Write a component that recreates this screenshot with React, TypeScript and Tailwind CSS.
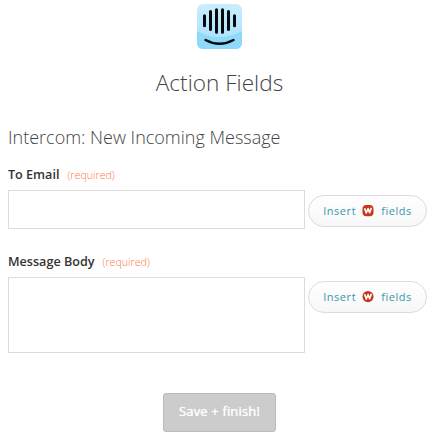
import React from 'react';

const IntercomLogo: React.FC = () => (
  <svg viewBox="0 0 45 45" className="w-[45px] h-[45px]">
    <defs>
      <linearGradient id="tile" x1="0" y1="0" x2="0" y2="1">
        <stop offset="0" stopColor="#c9edfd" />
        <stop offset="1" stopColor="#a6e0fb" />
      </linearGradient>
      <clipPath id="tile-clip">
        <rect width="45" height="45" rx="6" />
      </clipPath>
    </defs>
    <g clipPath="url(#tile-clip)">
      <rect width="45" height="45" fill="url(#tile)" />
      <path d="M0 27 Q22 39 45 27 V45 H0 Z" fill="#8fd9fb" />
    </g>
    <g fill="none" stroke="#050a0d" strokeWidth="3" strokeLinecap="round">
      <path d="M7.5 11.7v10M13.5 7.5v18M19.5 5.8v22.4M25.5 5.8v22.4M31.5 7.5v18M37.5 11.7v10" />
      <path d="M8.5 36 Q22.5 43.5 36.5 36" strokeWidth="2.4" />
    </g>
  </svg>
);

const BrandMark: React.FC<{ round?: boolean }> = ({ round }) => (
  <svg viewBox="0 0 12 12" className="w-3 h-3">
    <rect x="0.5" y="0" width="11" height="11.2" rx={round ? 5.5 : 4} fill="#c9341c" />
    <path
      d="M2.6 3.2L4.3 8 6.1 3.6 7.6 7.6 9.4 2.8"
      fill="none"
      stroke="#fff"
      strokeWidth="1.6"
      strokeLinejoin="round"
    />
  </svg>
);

const InsertButton: React.FC<{ round?: boolean }> = ({ round }) => (
  <button
    type="button"
    className="flex items-center justify-center w-[119px] h-8 rounded-full border border-[#dcdcdc] bg-linear-to-b from-white to-[#f7f7f7] text-[11px] tracking-[0.55px] text-[#3a96ac]"
  >
    <span>Insert</span>
    <span className="ml-1.5 mr-[7px]">
      <BrandMark round={round} />
    </span>
    <span>fields</span>
  </button>
);

const FieldLabel: React.FC<{ htmlFor: string; text: string }> = ({ htmlFor, text }) => (
  <label htmlFor={htmlFor} className="flex items-baseline h-5 leading-5">
    <span className="text-[12.6px] font-semibold text-[#333]">{text}</span>
    <span className="ml-2 text-[10.7px] font-light text-[#ff7a45]">(required)</span>
  </label>
);

export default function App() {
  return (
    <form className="w-[442px] h-[443px] overflow-hidden bg-white px-2 pt-1 font-['Open_Sans',sans-serif]">
      <header className="flex flex-col items-center w-[423px]">
        <IntercomLogo />
        <h1 className="mt-[18px] h-8 leading-8 text-[22.6px] font-light text-[#444]">Action Fields</h1>
      </header>

      <h2 className="mt-[26px] h-6 leading-6 text-[18px] font-light text-[#444]">
        Intercom: New Incoming Message
      </h2>

      <div className="mt-4">
        <FieldLabel htmlFor="email" text="To Email" />
        <div className="flex items-start gap-[3px] mt-[5px]">
          <input id="email" type="text" className="w-[297px] h-[39px] border border-[#dcdcdc] outline-none" />
          <div className="pt-[5px]">
            <InsertButton />
          </div>
        </div>
      </div>

      <div className="mt-[23px]">
        <FieldLabel htmlFor="body" text="Message Body" />
        <div className="flex items-start gap-[3px] mt-[5px]">
          <textarea id="body" className="w-[297px] h-[76px] border border-[#dcdcdc] outline-none resize-none" />
          <div className="pt-1">
            <InsertButton round />
          </div>
        </div>
      </div>

      <div className="flex justify-center w-[423px] mt-10">
        <button
          type="submit"
          className="w-[113px] h-[39px] pb-0.5 rounded-[3px] border border-[#bbb] bg-[#ccc] text-[13px] font-medium tracking-[0.15px] text-white [text-shadow:0_0_1px_#fff]"
        >
          Save + finish!
        </button>
      </div>
    </form>
  );
}
